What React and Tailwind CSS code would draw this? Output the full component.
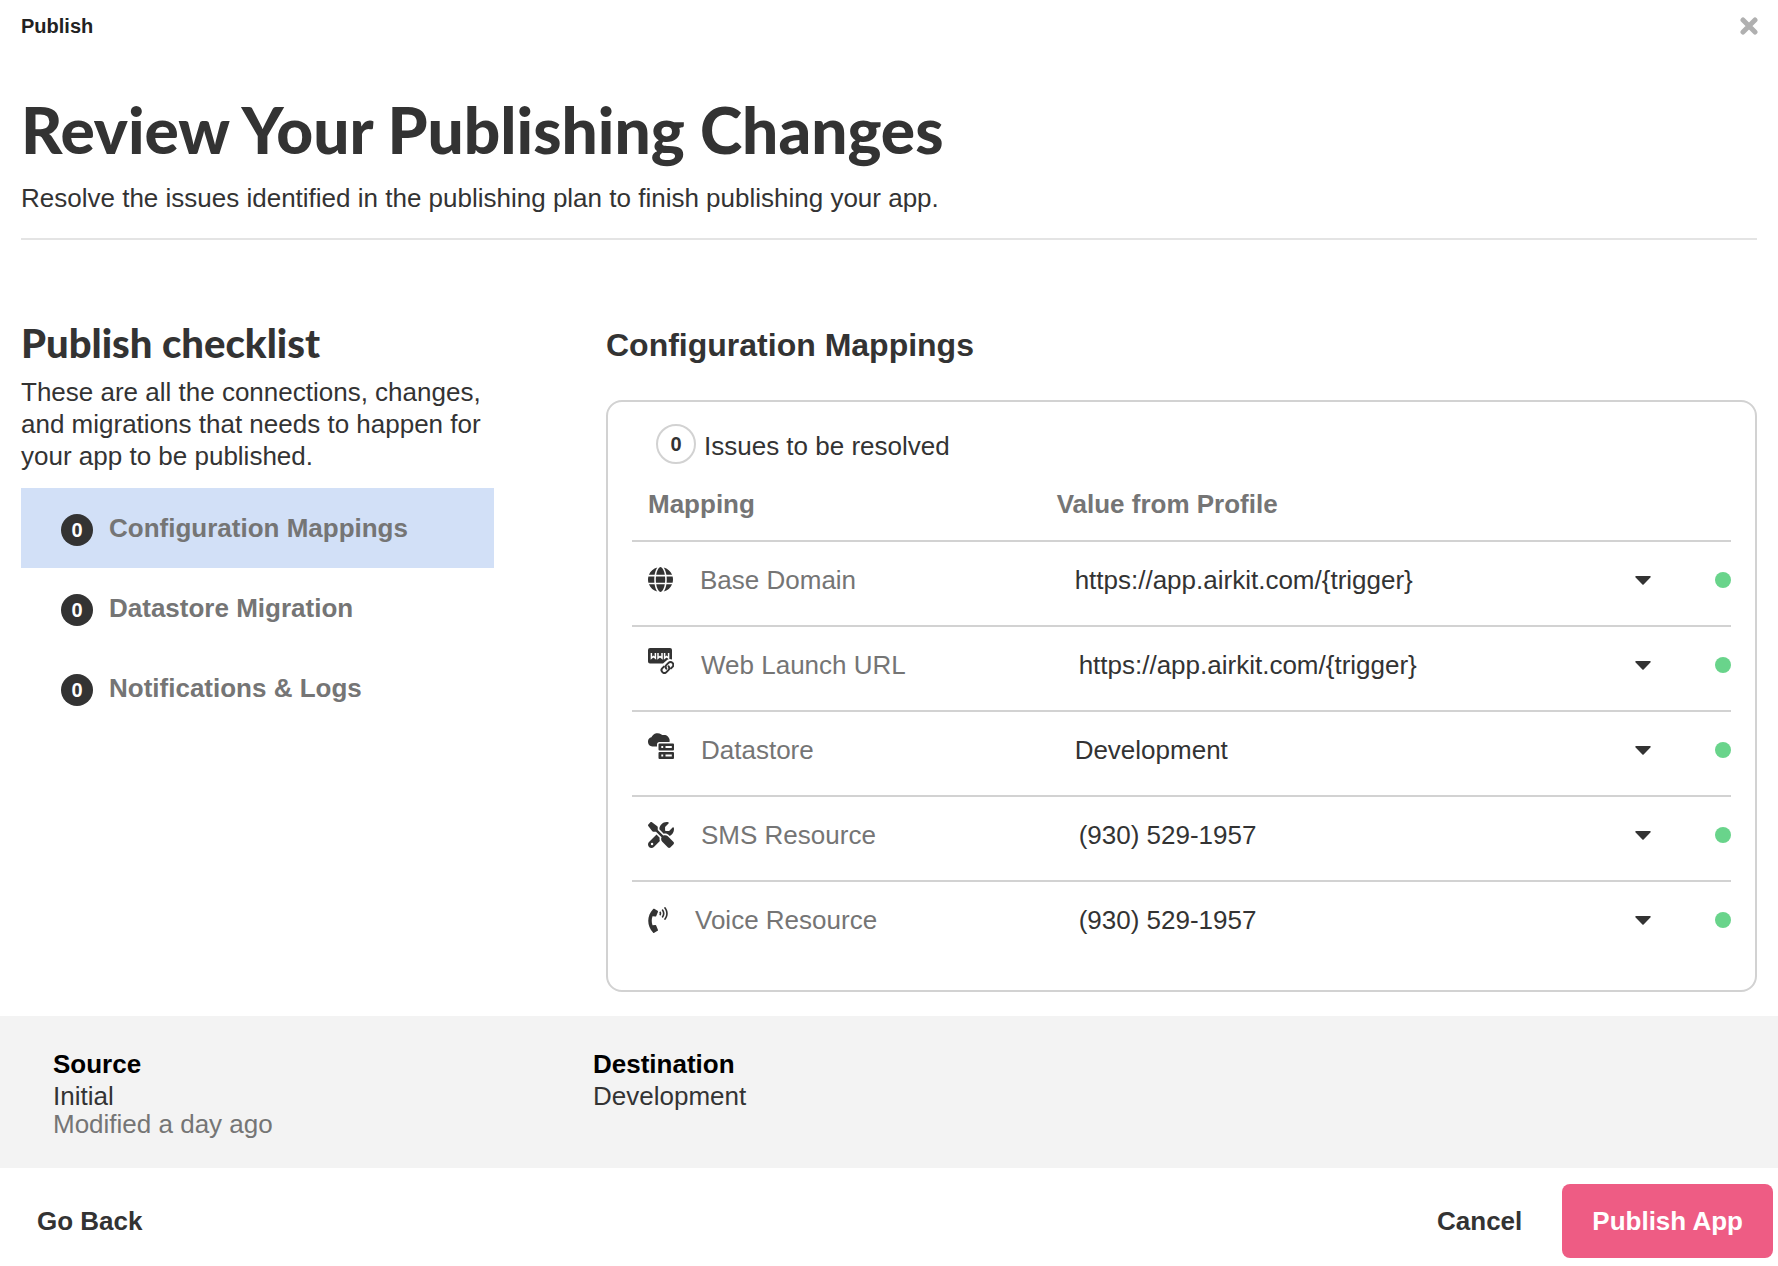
import { useState } from 'react';
import { FaGlobe, FaScrewdriverWrench } from 'react-icons/fa6';
import { FaPhoneVolume } from 'react-icons/fa';

const CHECKLIST = [
  { key: 'mappings', label: 'Configuration Mappings', count: 0 },
  { key: 'datastore', label: 'Datastore Migration', count: 0 },
  { key: 'logs', label: 'Notifications & Logs', count: 0 },
];

function WebLinkIcon() {
  return (
    <svg viewBox="0 0 26 26" className="h-[26px] w-[26px]" aria-hidden="true">
      <path
        fill="currentColor"
        d="M2 0h20a2 2 0 0 1 2 2v9.500a5.500 5.500 0 0 0-5.500 1L15 15.600H2a2 2 0 0 1-2-2V2a2 2 0 0 1 2-2z"
      />
      <path
        d="M3.400 5v5.200l2-1.700 2 1.700V5M10 5v5.200l2-1.700 2 1.700V5M16.600 5v5.200l2-1.700 2 1.700V5"
        fill="none"
        stroke="white"
        strokeWidth="1.500"
      />
      <g fill="none" stroke="currentColor" strokeWidth="2" strokeLinecap="round">
        <path d="M18.300 20.600a2.800 2.800 0 0 1 .2-3.700l2-2a2.800 2.800 0 0 1 4 4l-1.500 1.500" />
        <path d="M20.600 18.400a2.800 2.800 0 0 1-.2 3.700l-2 2a2.800 2.800 0 0 1-4-4l1.500-1.500" />
      </g>
    </svg>
  );
}

function CloudServerIcon() {
  return (
    <svg viewBox="0 0 26 26" className="h-[26px] w-[26px]" aria-hidden="true">
      <path
        fill="currentColor"
        d="M4.300 13.500a4.700 4.700 0 0 1-.9-9.200A6.800 6.800 0 0 1 14.300 2.100a5.800 5.800 0 0 1 7.200 6.900H11.500a2.500 2.500 0 0 0-2.500 2.500v2z"
      />
      <path
        fill="currentColor"
        fillRule="evenodd"
        d="M11.500 10.500h13.500a1 1 0 0 1 1 1V16.500a1 1 0 0 1-1 1H11.500a1 1 0 0 1-1-1v-5a1 1 0 0 1 1-1zm1.800 2.400v2.200h1.900v-2.200zm4.200 0v2.200h6.300v-2.200z"
      />
      <path
        fill="currentColor"
        fillRule="evenodd"
        d="M11.500 19h13.500a1 1 0 0 1 1 1V25a1 1 0 0 1-1 1H11.500a1 1 0 0 1-1-1v-5a1 1 0 0 1 1-1zm1.800 2.400v2.200h1.900v-2.200zm4.200 0v2.200h6.300v-2.200z"
      />
    </svg>
  );
}

const MAPPINGS = [
  { id: 'base-domain', label: 'Base Domain', value: 'https://app.airkit.com/{trigger}', icon: <FaGlobe className="h-[25px] w-[25px]" />, pad: 'pl-9' },
  { id: 'web-launch', label: 'Web Launch URL', value: 'https://app.airkit.com/{trigger}', icon: <WebLinkIcon />, pad: 'pl-10', raised: true },
  { id: 'datastore', label: 'Datastore', value: 'Development', icon: <CloudServerIcon />, pad: 'pl-9', raised: true },
  { id: 'sms', label: 'SMS Resource', value: '(930) 529-1957', icon: <FaScrewdriverWrench className="h-[26px] w-[26px]" />, pad: 'pl-10' },
  { id: 'voice', label: 'Voice Resource', value: '(930) 529-1957', icon: <FaPhoneVolume className="h-[26px] w-5" />, pad: 'pl-10' },
];

function MappingRow({ row }) {
  return (
    <tr className="border-t-2 border-[#d2d2d2]">
      <th scope="row" className="h-[85px] p-0 pb-2 pl-4 text-left font-normal text-[#757575]">
        <label htmlFor={row.id} className="flex items-center gap-[27px]">
          <span className={`text-[#333] ${row.raised ? 'pb-2' : ''}`}>{row.icon}</span>
          {row.label}
        </label>
      </th>
      <td className="p-0 pb-2">
        <div className="relative">
          <select id={row.id} className={`block w-full appearance-none bg-transparent ${row.pad}`}>
            <option>{row.value}</option>
          </select>
          <svg viewBox="0 0 16 9" className="pointer-events-none absolute top-3 right-[31px] h-[9px] w-4" aria-hidden="true">
            <path d="M1 0h14a.8.8 0 0 1 .6 1.300L8.600 8.500a.8.8 0 0 1-1.200 0L.4 1.300A.8.8 0 0 1 1 0z" fill="#333" />
          </svg>
        </div>
      </td>
      <td className="p-0 pb-2">
        <span className="ml-auto block h-4 w-4 rounded-full bg-[#69d48b]" />
      </td>
    </tr>
  );
}

export default function App() {
  const [active, setActive] = useState('mappings');

  return (
    <div className="flex min-h-screen flex-col bg-white font-['Liberation_Sans',Arial,sans-serif] text-[26px] leading-8 text-[#333]">
      {/* Title bar */}
      <header className="flex h-[52px] items-center justify-between pr-5 pl-[21px]">
        <span className="text-xl font-bold text-[#222]">Publish</span>
        <button type="button" aria-label="Close">
          <svg viewBox="0 0 18 18" className="h-[18px] w-[18px]" aria-hidden="true">
            <path d="M3 3l12 12M15 3L3 15" stroke="#b0b0b0" strokeWidth="5" strokeLinecap="round" />
          </svg>
        </button>
      </header>

      <main className="flex-1 px-[21px] pb-6">
        <div className="border-b-2 border-[#e4e4e4] pt-10 pb-6">
          <h1 className="font-['Lato','Liberation_Sans',sans-serif] text-[64px] leading-[76px] font-black">
            Review Your Publishing Changes
          </h1>
          <p className="mt-[14px]">Resolve the issues identified in the publishing plan to finish publishing your app.</p>
        </div>

        <div className="flex gap-28 pt-20">
          {/* Checklist */}
          <section className="w-[473px] shrink-0">
            <h2 className="font-['Lato','Liberation_Sans',sans-serif] text-[40px] leading-[46px] font-black">Publish checklist</h2>
            <p className="mt-[10px]">
              These are all the connections, changes, and migrations that needs to happen for your app to be published.
            </p>
            <ul className="mt-4">
              {CHECKLIST.map(item => (
                <li key={item.key}>
                  <button
                    type="button"
                    onClick={() => setActive(item.key)}
                    className={`flex h-20 w-full items-center gap-4 pl-10 font-bold text-[#757575] ${
                      active === item.key ? 'bg-[#d2e0f7]' : ''
                    }`}
                  >
                    <span className="mt-1 flex h-8 w-8 items-center justify-center rounded-full bg-[#333] text-xl text-white">
                      {item.count}
                    </span>
                    {item.label}
                  </button>
                </li>
              ))}
            </ul>
          </section>

          {/* Mappings */}
          <section className="min-w-0 flex-1">
            <h2 className="pt-[5px] text-[32px] leading-10 font-bold">Configuration Mappings</h2>
            <div className="mt-[35px] rounded-2xl border-2 border-[#d2d2d2] px-6 pt-[22px] pb-6">
              <div className="flex items-center gap-2 pl-6">
                <span className="flex h-10 w-10 items-center justify-center rounded-full border-2 border-[#d2d2d2] text-xl font-bold">
                  0
                </span>
                <span className="pt-1">Issues to be resolved</span>
              </div>
              <table className="mt-4 w-full table-fixed border-collapse">
                <thead>
                  <tr className="text-left text-[#757575]">
                    <th className="h-[61px] w-[37%] p-0 pb-3 pl-4">Mapping</th>
                    <th className="p-0 pb-3 pl-[18px]">Value from Profile</th>
                    <th className="w-[49px] p-0" aria-label="Status" />
                  </tr>
                </thead>
                <tbody>
                  {MAPPINGS.map(row => (
                    <MappingRow key={row.id} row={row} />
                  ))}
                </tbody>
              </table>
            </div>
          </section>
        </div>
      </main>

      {/* Source and destination */}
      <section className="flex h-[152px] bg-[#f3f3f3] px-[53px] pt-8">
        <div className="w-[540px]">
          <h3 className="font-bold text-black">Source</h3>
          <p>Initial</p>
          <p className="leading-6 text-[#757575]">Modified a day ago</p>
        </div>
        <div>
          <h3 className="font-bold text-black">Destination</h3>
          <p>Development</p>
        </div>
      </section>

      <footer className="flex h-[98px] items-center justify-between pt-4 pr-[5px] pb-2 pl-[37px] font-bold">
        <button type="button">Go Back</button>
        <div className="flex items-center gap-10">
          <button type="button">Cancel</button>
          <button type="button" className="h-[74px] rounded-lg bg-[#ee5c84] px-[30px] text-white">
            Publish App
          </button>
        </div>
      </footer>
    </div>
  );
}
